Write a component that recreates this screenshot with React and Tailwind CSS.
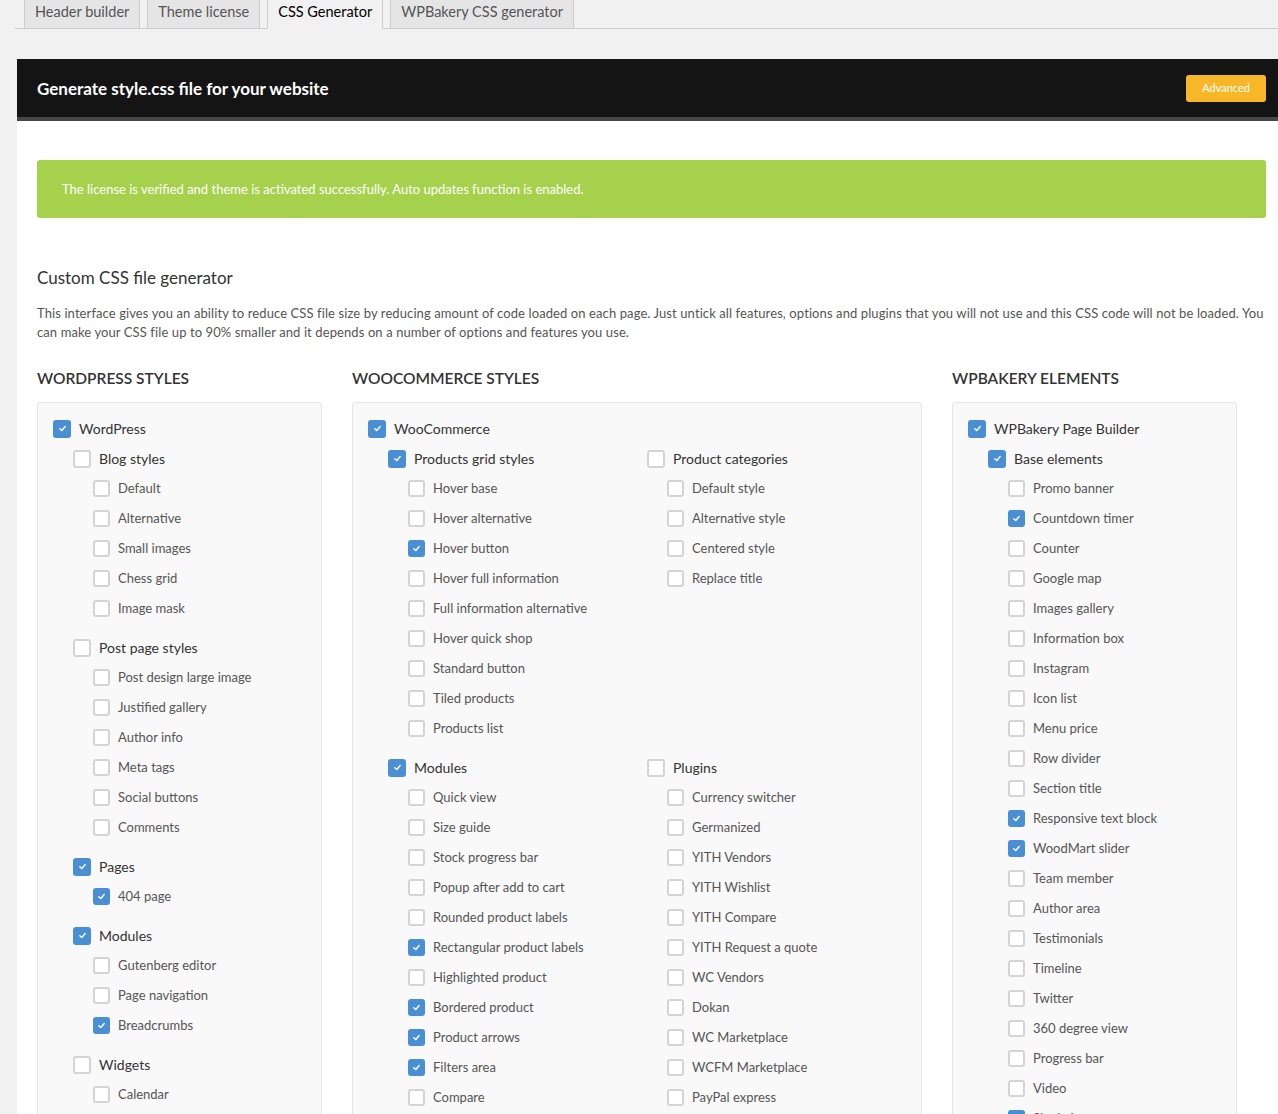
import React from "react";

const font = { fontFamily: 'Lato, "Open Sans", sans-serif' };

// [label, checked]
const wordpress = {
  label: "WordPress",
  checked: true,
  groups: [
    { label: "Blog styles", checked: false, items: [["Default"], ["Alternative"], ["Small images"], ["Chess grid"], ["Image mask"]] },
    {
      label: "Post page styles",
      checked: false,
      items: [["Post design large image"], ["Justified gallery"], ["Author info"], ["Meta tags"], ["Social buttons"], ["Comments"]],
    },
    { label: "Pages", checked: true, items: [["404 page", true]] },
    { label: "Modules", checked: true, items: [["Gutenberg editor"], ["Page navigation"], ["Breadcrumbs", true]] },
    { label: "Widgets", checked: false, items: [["Calendar"]] },
  ],
};

const woocommerce = {
  label: "WooCommerce",
  checked: true,
  groups: [
    {
      label: "Products grid styles",
      checked: true,
      items: [
        ["Hover base"],
        ["Hover alternative"],
        ["Hover button", true],
        ["Hover full information"],
        ["Full information alternative"],
        ["Hover quick shop"],
        ["Standard button"],
        ["Tiled products"],
        ["Products list"],
      ],
    },
    { label: "Product categories", checked: false, items: [["Default style"], ["Alternative style"], ["Centered style"], ["Replace title"]] },
    {
      label: "Modules",
      checked: true,
      items: [
        ["Quick view"],
        ["Size guide"],
        ["Stock progress bar"],
        ["Popup after add to cart"],
        ["Rounded product labels"],
        ["Rectangular product labels", true],
        ["Highlighted product"],
        ["Bordered product", true],
        ["Product arrows", true],
        ["Filters area", true],
        ["Compare"],
      ],
    },
    {
      label: "Plugins",
      checked: false,
      items: [
        ["Currency switcher"],
        ["Germanized"],
        ["YITH Vendors"],
        ["YITH Wishlist"],
        ["YITH Compare"],
        ["YITH Request a quote"],
        ["WC Vendors"],
        ["Dokan"],
        ["WC Marketplace"],
        ["WCFM Marketplace"],
        ["PayPal express"],
      ],
    },
  ],
};

const wpbakery = {
  label: "WPBakery Page Builder",
  checked: true,
  groups: [
    {
      label: "Base elements",
      checked: true,
      items: [
        ["Promo banner"],
        ["Countdown timer", true],
        ["Counter"],
        ["Google map"],
        ["Images gallery"],
        ["Information box"],
        ["Instagram"],
        ["Icon list"],
        ["Menu price"],
        ["Row divider"],
        ["Section title"],
        ["Responsive text block", true],
        ["WoodMart slider", true],
        ["Team member"],
        ["Author area"],
        ["Testimonials"],
        ["Timeline"],
        ["Twitter"],
        ["360 degree view"],
        ["Progress bar"],
        ["Video"],
        ["Single image", true],
      ],
    },
  ],
};

const Box = ({ checked, small }) => (
  <span
    className={`flex shrink-0 items-center justify-center rounded-[3px] ${small ? "h-[17px] w-[17px]" : "h-[18px] w-[18px]"} ${
      checked ? "bg-[#4a8fd4]" : "border-2 border-[#d4d4d4] bg-white"
    }`}
  >
    {checked && (
      <svg width="9" height="9" viewBox="0 0 10 10" fill="none">
        <path d="M2 5.2 L4.2 7.2 L8 2.8" stroke="white" strokeWidth="1.6" strokeLinecap="round" strokeLinejoin="round" />
      </svg>
    )}
  </span>
);

const Row = ({ label, checked, level }) => (
  <div className="flex h-[30px] items-center gap-[8px]">
    <Box checked={checked} small={level === 2} />
    <span className={level === 2 ? "text-[13px] text-[#555]" : "text-[14px] text-[#333]"}>{label}</span>
  </div>
);

const Group = ({ group }) => (
  <div className="mb-[9px]">
    <Row label={group.label} checked={group.checked} level={1} />
    <div className="pl-[20px]">
      {group.items.map(([l, c]) => (
        <Row key={l} label={l} checked={!!c} level={2} />
      ))}
    </div>
  </div>
);

const Panel = ({ data, cols }) => (
  <div className="rounded-[3px] border border-[#e5e5e5] bg-[#f9f9f9] pl-[15px] pr-[15px] pt-[11px]">
    <Row label={data.label} checked={data.checked} level={0} />
    <div className={`pl-[20px] ${cols ? "grid grid-cols-2" : ""}`}>
      {data.groups.map((g) => (
        <Group key={g.label} group={g} />
      ))}
    </div>
  </div>
);

const tabs = ["Header builder", "Theme license", "CSS Generator", "WPBakery CSS generator"];

export default function App() {
  return (
    <div className="h-[1114px] overflow-hidden bg-[#f1f1f1]" style={font}>
      {/* tabs */}
      <div className="ml-[15px] flex h-[29px] gap-[7px] border-b border-[#ccc] pl-[9px]">
        {tabs.map((t) => (
          <div
            key={t}
            className={`-mb-px flex h-[29px] items-center border border-t-0 border-[#ccc] px-[10px] pb-[4px] text-[14.5px] ${
              t === "CSS Generator" ? "border-b-[#f1f1f1] bg-[#f1f1f1] text-[#000]" : "bg-[#e5e5e5] text-[#555]"
            }`}
          >
            {t}
          </div>
        ))}
      </div>

      <div className="ml-[17px] mt-[30px] w-[1269px] bg-white">
        {/* header */}
        <div className="flex h-[62px] items-center justify-between border-b-[4px] border-[#474747] bg-[#141414] pl-[20px] pr-[20px]">
          <h1 className="mt-[1px] text-[17px] font-bold text-white">Generate style.css file for your website</h1>
          <button className="h-[27px] rounded-[3px] bg-[#f8b729] px-[16px] text-[11px] text-white">Advanced</button>
        </div>

        <div className="px-[20px] pb-[40px] pt-[39px]">
          <div className="flex h-[58px] items-center rounded-[3px] bg-[#a6d14c] pl-[25px] pt-[2px] text-[13px] text-white">
            The license is verified and theme is activated successfully. Auto updates function is enabled.
          </div>

          <h2 className="mt-[47px] text-[17px] text-[#333]">Custom CSS file generator</h2>
          <p className="mt-[13px] text-[13px] leading-[19px] tracking-[0.1px] text-[#555]">
            This interface gives you an ability to reduce CSS file size by reducing amount of code loaded on each page. Just untick all features,
            options and plugins that you will not use and this CSS code will not be loaded. You can make your CSS file up to 90% smaller and it
            depends on a number of options and features you use.
          </p>

          <div className="mt-[25px] flex gap-[30px]">
            <div className="w-[285px]">
              <h3 className="mb-[12px] text-[15.5px] font-semibold uppercase text-[#333]">WordPress styles</h3>
              <Panel data={wordpress} />
            </div>
            <div className="w-[570px]">
              <h3 className="mb-[12px] text-[15.5px] font-semibold uppercase text-[#333]">WooCommerce styles</h3>
              <Panel data={woocommerce} cols />
            </div>
            <div className="w-[285px]">
              <h3 className="mb-[12px] text-[15.5px] font-semibold uppercase text-[#333]">WPBakery elements</h3>
              <Panel data={wpbakery} />
            </div>
          </div>
        </div>
      </div>
    </div>
  );
}
